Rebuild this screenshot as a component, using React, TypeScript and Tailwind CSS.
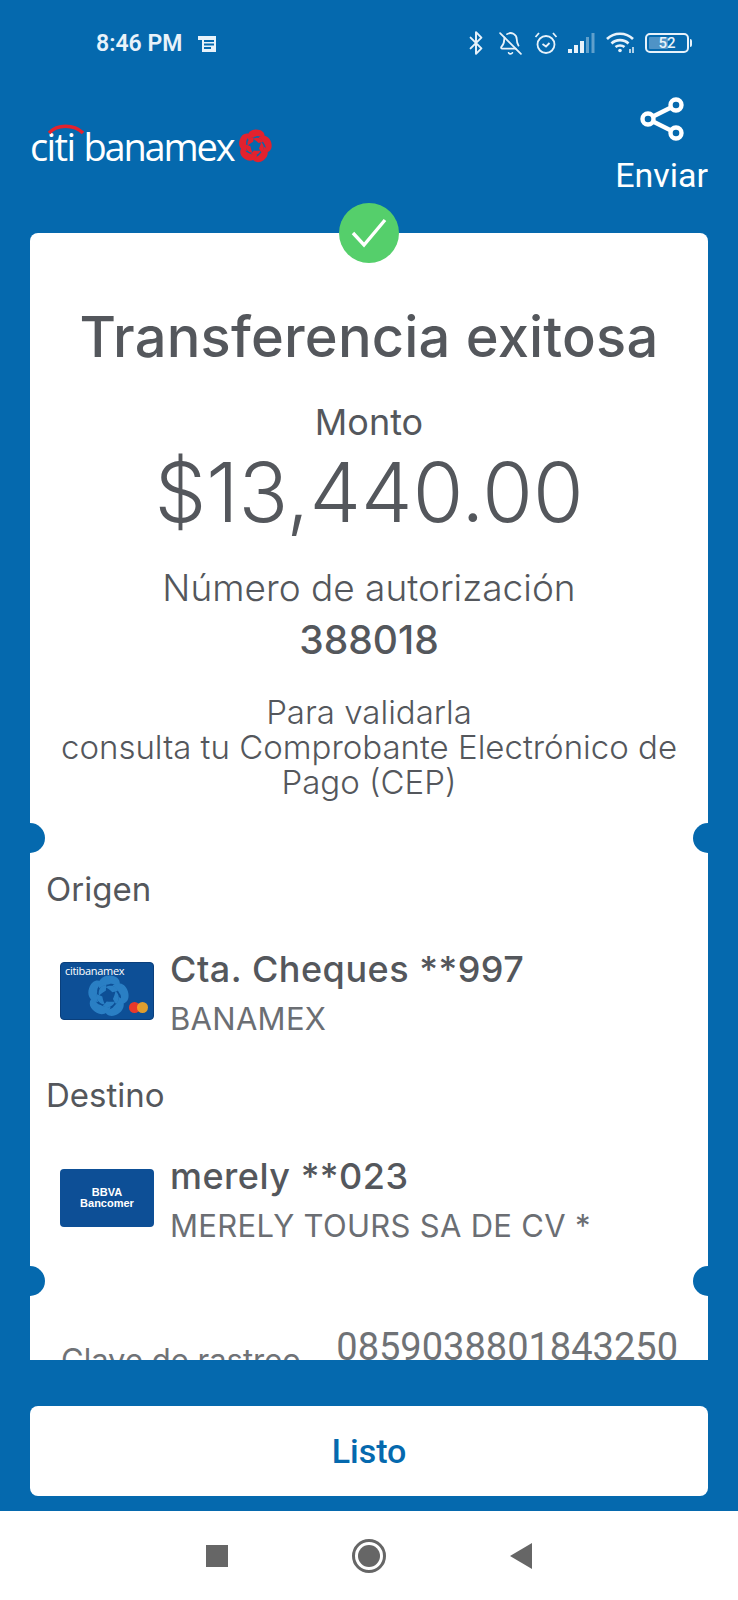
import { BellOff, Bluetooth } from 'lucide-react'

const font = { fontFamily: 'Inter, "Noto Sans", sans-serif' }
const logoFont = { fontFamily: '"Open Sans", "Noto Sans", sans-serif' }

function Flower({ size, color, hole }: { size: number; color: string; hole?: string }) {
  const petals = [0, 72, 144, 216, 288]
  return (
    <svg width={size} height={size} viewBox="0 0 34 34" className="shrink-0">
      {petals.map((angle) => (
        <g key={angle} transform={`rotate(${angle} 17 17)`}>
          <path d="M10 11 C8 5 12 0.5 18 0.5 C25 0.5 28 5 26 10 C23 7.5 20 6.5 18 7.5 C15 8 12 9 10 11 Z" fill={color} />
          <path d="M15 10 C19 7.5 24 9 25 13 L20.5 14 C19 12.5 17 11 15 10 Z" fill={color} />
        </g>
      ))}
      <circle cx="17" cy="17" r="4.5" fill={hole ?? 'none'} />
    </svg>
  )
}

function Logo() {
  return (
    <div className="relative flex items-baseline text-white font-medium" style={logoFont}>
      <svg width="36" height="12" viewBox="0 0 36 12" className="absolute left-[18px] top-[-1px]">
        <path d="M1 10 C9 1 26 1 35 10" stroke="#e2222e" strokeWidth="3.5" fill="none" />
      </svg>
      <span className="text-[38px] leading-[44px] tracking-[-1.6px] mr-[9px]">citi</span>
      <span className="text-[38px] leading-[44px] tracking-[-2.2px]">banamex</span>
      <div className="ml-[5px] self-center">
        <Flower size={34} color="#e2222e" />
      </div>
    </div>
  )
}

function StatusBar() {
  return (
    <div className="h-[86px] pl-[96px] pr-[46px] pt-[29px] flex justify-between items-start text-[#e8f2fa]">
      <div className="flex items-center h-[26px] mt-[2px]">
        <span className="text-[23px] font-semibold" style={{ fontFamily: 'Roboto, sans-serif' }}>8:46 PM</span>
        <svg width="20" height="18" viewBox="0 0 20 18" className="ml-[15px]">
          <path d="M1 1 H19 V17 H5 V5 H1 Z" fill="#e8f2fa" />
          <path d="M7 6 H17 M7 9.5 H17 M7 13 H14" stroke="#0569ae" strokeWidth="1.8" />
        </svg>
      </div>
      <div className="flex items-center h-[26px] mt-[1px]">
        <Bluetooth size={26} strokeWidth={1.8} className="mx-[-4px]" />
        <BellOff size={25} strokeWidth={1.7} className="ml-[13px]" />
        <svg width="24" height="24" viewBox="0 0 24 24" className="ml-[11px]" fill="none" stroke="currentColor" strokeWidth="1.8">
          <circle cx="12" cy="13.5" r="8.5" />
          <path d="M8.5 13 L12 15.5 L15.5 12 M1.5 6 L5 2 M22.5 6 L19 2" />
        </svg>
        <svg width="28" height="20" viewBox="0 0 28 20" className="ml-[9px]">
          <path d="M1 16 H5 V20 H1 Z M7 12 H11 V20 H7 Z M13 8 H17 V20 H13 Z" fill="currentColor" />
          <path d="M19 4 H22 V20 H19 Z M24.5 0 H27.5 V20 H24.5 Z" fill="currentColor" opacity="0.4" />
        </svg>
        <svg width="29" height="22" viewBox="0 0 29 22" className="ml-[11px]" fill="none" stroke="currentColor" strokeWidth="2.6">
          <path d="M1 7 C8 0 20 0 27 7 M5.5 11.5 C10 7 18 7 22.5 11.5 M9.5 15 C12 13 16 13 18.5 15" />
          <circle cx="14" cy="18.5" r="1.8" fill="currentColor" stroke="none" />
          <path d="M24 17 V21 M27 15 V21" strokeWidth="1.5" />
        </svg>
        <div className="ml-[10px] flex items-center">
          <div className="w-[44px] h-[20px] rounded-[5px] border-[2px] border-[#e8f2fa] p-[2px] relative">
            <div className="h-full w-[52%] bg-[#4f93c6] rounded-[1px]" />
            <span className="absolute inset-0 flex items-center justify-center text-[15px] font-medium leading-none" style={{ fontFamily: 'Roboto, sans-serif' }}>52</span>
          </div>
          <div className="w-[2px] h-[8px] ml-[1px] bg-[#e8f2fa] rounded-r-sm" />
        </div>
      </div>
    </div>
  )
}

function Header() {
  return (
    <div className="h-[147px] pl-[30px] pr-[30px] flex justify-between items-start">
      <div className="mt-[38px]">
        <Logo />
      </div>
      <div className="flex flex-col items-center mt-[11px]">
        <svg width="44" height="44" viewBox="0 0 44 44" fill="none" stroke="white" strokeWidth="4.4">
          <circle cx="36" cy="8" r="5.5" />
          <circle cx="8" cy="22" r="5.5" />
          <circle cx="36" cy="36" r="5.5" />
          <path d="M13 19.5 L31 10.5 M13 24.5 L31 33.5" />
        </svg>
        <span className="text-white text-[34px] leading-[40px] mt-[14px]" style={{ fontFamily: 'Roboto, sans-serif' }}>Enviar</span>
      </div>
    </div>
  )
}

function BankCard() {
  return (
    <div className="w-[94px] h-[58px] rounded-[4px] bg-[#0d4f96] border border-[#0a3f7c] relative overflow-hidden shrink-0">
      <span className="absolute left-[4px] top-[1px] text-white text-[11px] leading-[14px] tracking-[-0.3px]" style={logoFont}>citibanamex</span>
      <div className="absolute left-[26px] top-[12px]">
        <Flower size={42} color="#2a7fc4" />
      </div>
      <div className="absolute right-[13px] bottom-[6px] w-[11px] h-[11px] rounded-full bg-[#e8392b]" />
      <div className="absolute right-[5px] bottom-[6px] w-[11px] h-[11px] rounded-full bg-[#f5a623]/90" />
    </div>
  )
}

function BbvaCard() {
  return (
    <div className="w-[94px] h-[58px] rounded-[4px] bg-[#0d4f96] flex flex-col items-center justify-center shrink-0 text-white text-[11px] font-bold leading-[11px]" style={{ fontFamily: '"Liberation Sans", sans-serif' }}>
      <span>BBVA</span>
      <span>Bancomer</span>
    </div>
  )
}

function Account({ icon, title, subtitle }: { icon: React.ReactNode; title: string; subtitle: string }) {
  return (
    <div className="flex pl-[30px]">
      <div className="pt-[14px]">{icon}</div>
      <div className="ml-[16px]">
        <div className="text-[36px] leading-[42px] text-[#54575c] font-medium tracking-[0.5px]">{title}</div>
        <div className="text-[31px] leading-[42px] mt-[8px] text-[#6b6e73] tracking-[0.3px]">{subtitle}</div>
      </div>
    </div>
  )
}

function Notch({ side, top }: { side: 'left' | 'right'; top: string }) {
  return (
    <div className={`absolute w-[30px] h-[30px] rounded-full bg-[#0569ae] ${side === 'left' ? 'left-[-15px]' : 'right-[-15px]'} ${top}`} />
  )
}

export default function App() {
  return (
    <div className="w-[738px] h-[1600px] flex flex-col bg-[#0569ae] overflow-hidden" style={font}>
      <StatusBar />
      <Header />

      <div className="relative mx-[30px] h-[1127px]">
        <div className="absolute left-1/2 top-[-30px] -translate-x-1/2 w-[60px] h-[60px] rounded-full bg-[#55cf6b] z-10 flex items-center justify-center">
          <svg width="36" height="30" viewBox="0 0 36 30" fill="none" stroke="white" strokeWidth="3.4">
            <path d="M2 15 L13 27 L34 2" />
          </svg>
        </div>
        <div className="h-full bg-white rounded-t-[8px] overflow-hidden relative text-[#54575c]">
          <Notch side="left" top="top-[590px]" />
          <Notch side="right" top="top-[590px]" />
          <Notch side="left" top="top-[1033px]" />
          <Notch side="right" top="top-[1033px]" />

          <div className="text-center">
            <div className="pt-[70px] text-[56px] leading-[68px] font-medium tracking-[0.2px]">Transferencia exitosa</div>
            <div className="mt-[29px] text-[36px] leading-[44px]">Monto</div>
            <div className="mt-[1px] text-[82px] leading-[96px] font-light">$13,440.00</div>
            <div className="mt-[24px] text-[37px] leading-[46px] font-light">Número de autorización</div>
            <div className="mt-[6px] text-[39px] leading-[46px] font-medium">388018</div>
            <div className="mt-[32px] text-[33px] leading-[35px] font-light">
              Para validarla
              <br />
              consulta tu Comprobante Electrónico de
              <br />
              Pago (CEP)
            </div>
          </div>

          <div className="mt-[69px] pl-[16px] text-[33px] leading-[40px]">Origen</div>
          <div className="mt-[39px]">
            <Account icon={<BankCard />} title="Cta. Cheques **997" subtitle="BANAMEX" />
          </div>
          <div className="mt-[35px] pl-[16px] text-[33px] leading-[40px]">Destino</div>
          <div className="mt-[40px]">
            <Account icon={<BbvaCard />} title="merely **023" subtitle="MERELY TOURS SA DE CV *" />
          </div>

          <div className="mt-[80px] flex justify-between pl-[31px] pr-[30px] text-[#6f7276]">
            <span className="text-[31px] leading-[40px] mt-[13px]">Clave de rastreo</span>
            <span className="text-[38px] leading-[40px]" style={{ fontFamily: 'Roboto, sans-serif' }}>0859038801843250</span>
          </div>
        </div>
      </div>

      <div className="mx-[30px] mt-[46px] h-[90px] rounded-[8px] bg-white flex items-center justify-center text-[#0569ae] text-[34px]" style={{ fontFamily: 'Roboto, sans-serif', fontWeight: 500 }}>
        Listo
      </div>

      <div className="mt-[15px] flex-1 bg-white flex items-center justify-center gap-[124px]">
        <div className="w-[22px] h-[22px] bg-[#666666]" />
        <div className="w-[34px] h-[34px] rounded-full border-[3px] border-[#666666] flex items-center justify-center">
          <div className="w-[22px] h-[22px] rounded-full bg-[#666666]" />
        </div>
        <svg width="22" height="26" viewBox="0 0 22 26">
          <path d="M22 0 V26 L0 13 Z" fill="#666666" />
        </svg>
      </div>
    </div>
  )
}
